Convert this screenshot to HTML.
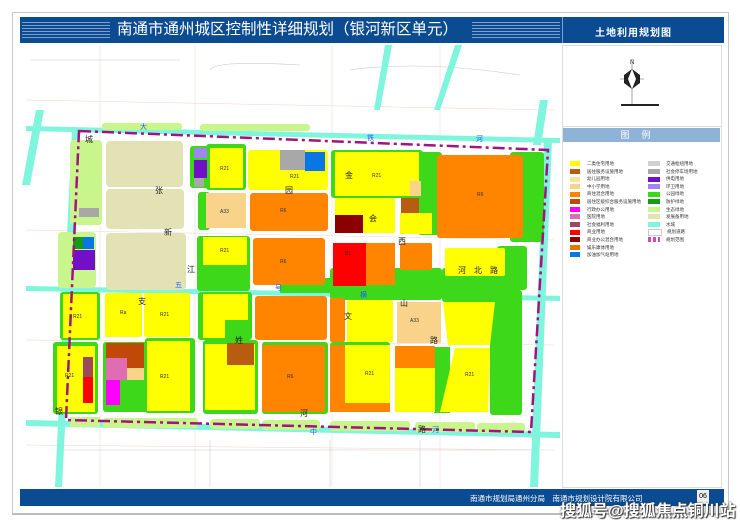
<!DOCTYPE html>
<html><head><meta charset="utf-8"><style>
body{margin:0;width:740px;height:523px;background:#fff;overflow:hidden;font-family:"Liberation Sans","Noto Sans CJK SC",sans-serif;position:relative}
.a{position:absolute}
</style></head><body>
<div class="a" style="left:12px;top:12px;width:715px;height:500px;border:1px solid #c8c8c8;border-bottom:2px solid #bbb"></div>
<div class="a" style="left:20px;top:17px;width:704px;height:26px;background:#0b4b92"></div>
<div class="a" style="left:22px;top:20px;width:88px;height:20px;background:repeating-linear-gradient(#0b4b92 0 2px,#7f9fc8 2px 3px)"></div>
<div class="a" style="left:472px;top:20px;width:88px;height:20px;background:repeating-linear-gradient(#0b4b92 0 2px,#7f9fc8 2px 3px)"></div>
<div class="a" style="left:562px;top:17px;width:1px;height:26px;background:#7f9fc8"></div>
<div class="a" style="left:117px;top:20px;color:#fff;font-size:15.5px;line-height:20px;white-space:nowrap">南通市通州城区控制性详细规划（银河新区单元）</div>
<div class="a" style="left:595px;top:24px;color:#fff;font-size:10px;font-weight:bold;letter-spacing:1px">土地利用规划图</div>
<div class="a" style="left:562px;top:45px;width:158px;height:80px;border:1px solid #ddd"></div>
<svg class="a" style="left:620px;top:55px" width="40" height="55"><line x1="12" y1="4" x2="12" y2="50" stroke="#666" stroke-width=".6"/><line x1="0" y1="24" x2="24" y2="24" stroke="#666" stroke-width=".6"/><polygon points="12,14 20,20 20,28 12,34 4,28 4,20" fill="#222"/><polygon points="12,14 16,24 12,34 8,24" fill="#fff"/><text x="10" y="9" font-size="6" fill="#333">N</text></svg>
<div class="a" style="left:621px;top:104px;width:38px;height:2px;background:#222"></div>
<div class="a" style="left:562px;top:126px;width:158px;height:360px;border:1px solid #ddd"></div>
<div class="a" style="left:563px;top:128px;width:157px;height:14px;background:#8fb3d6;color:#fff;font-size:9px;text-align:center;line-height:14px;letter-spacing:12px">图例</div>
<div class="a" style="left:20px;top:489px;width:704px;height:17px;background:#0b4b92"></div>
<div class="a" style="left:470px;top:493px;color:#fff;font-size:7.5px;white-space:nowrap">南通市规划局通州分局　南通市规划设计院有限公司</div>
<div class="a" style="left:697px;top:490px;width:12px;height:14px;background:#eee;color:#000;font-size:7px;text-align:center;line-height:14px">06</div>
<svg class="a" style="left:0;top:0" width="740" height="523" font-family="Liberation Sans,Noto Sans CJK SC,sans-serif">
<rect x="26" y="45" width="528" height="442" fill="#fff"/>
<g stroke="#f6d0d0" stroke-width=".5" fill="none">
<path d="M26 100 L554 110 M26 230 L554 240 M26 340 L554 345 M26 445 L554 450 M100 45 V487 M195 45 V487 M332 45 V487 M440 45 V487"/></g>
<g stroke="#ccc" stroke-width=".6" fill="none">
<path d="M30 60 H180 M210 70 Q215 60 300 65 M350 70 Q420 60 520 75 M60 450 H540 M210 440 V487 M330 440 V487 M420 440 V487"/></g>
<g fill="#7ff5dd">
<polygon points="36,110 44,110 30,185 22,185"/><polygon points="72,130 80,130 62,487 55,487"/>
<polygon points="26,126 560,138 560,143 26,131"/><polygon points="26,286 560,296 560,301 26,291"/>
<polygon points="26,420 560,432 560,438 26,426"/><polygon points="544,140 552,140 538,487 530,487"/>
<polygon points="540,100 548,100 541,145 533,145"/>
<polygon points="385,45 392,45 380,110 374,110"/><polygon points="455,45 462,45 440,110 434,110"/>
</g>
<g fill="#c8f58c">
<rect x="70" y="140" width="32" height="85" rx="4"/><rect x="58" y="232" width="38" height="56" rx="4"/>
<rect x="102" y="123" width="80" height="7" rx="3"/><rect x="200" y="124" width="110" height="7" rx="3"/>
<rect x="70" y="417" width="30" height="10"/><rect x="103" y="418" width="95" height="10" rx="3"/><rect x="210" y="419" width="50" height="10" rx="3"/><rect x="262" y="420" width="58" height="10" rx="3"/><rect x="330" y="421" width="80" height="10" rx="3"/><rect x="415" y="422" width="60" height="10" rx="3"/><rect x="477" y="423" width="48" height="10" rx="3"/>
</g>
<g fill="#e3e2b4"><rect x="106" y="141" width="77" height="46" rx="4"/><rect x="106" y="189" width="78" height="40" rx="4"/><rect x="106" y="233" width="80" height="57" rx="4"/></g>
<g fill="#3dd81a">
<rect x="190" y="146" width="20" height="42" rx="3"/><rect x="206" y="144" width="40" height="46" rx="3"/><rect x="198" y="192" width="12" height="38" rx="3"/>
<rect x="197" y="236" width="53" height="55" rx="3"/><rect x="331" y="150" width="92" height="48" rx="3"/><rect x="418" y="152" width="24" height="46" rx="3"/>
<rect x="418" y="197" width="22" height="38" rx="3"/><rect x="510" y="152" width="34" height="90" rx="3"/><rect x="497" y="246" width="30" height="44" rx="3"/>
<rect x="330" y="268" width="112" height="32" rx="3"/><rect x="442" y="268" width="60" height="34" rx="3"/><rect x="280" y="278" width="50" height="15"/>
<rect x="60" y="292" width="40" height="48" rx="3"/><rect x="198" y="292" width="54" height="48" rx="3"/><rect x="53" y="342" width="45" height="72" rx="3"/>
<rect x="103" y="342" width="45" height="70" rx="3"/><rect x="145" y="338" width="50" height="75" rx="3"/><rect x="203" y="340" width="55" height="74" rx="3"/>
<rect x="490" y="290" width="32" height="125" rx="3"/><rect x="434" y="347" width="16" height="66"/>
<rect x="262" y="342" width="66" height="72" rx="3"/><rect x="330" y="342" width="60" height="70" rx="3"/>
</g>
<g fill="#ffff00">
<rect x="210" y="148" width="33" height="40"/><rect x="248" y="150" width="80" height="40" rx="3"/><rect x="335" y="152" width="84" height="44"/>
<rect x="335" y="198" width="60" height="35" rx="2"/><rect x="400" y="213" width="32" height="21"/><rect x="203" y="237" width="44" height="28"/>
<rect x="445" y="248" width="60" height="28" rx="2"/><rect x="63" y="294" width="34" height="44"/><rect x="105" y="293" width="37" height="44" rx="2"/>
<rect x="144" y="293" width="46" height="44" rx="2"/><rect x="203" y="294" width="45" height="26"/><rect x="203" y="318" width="22" height="20"/>
<rect x="347" y="300" width="46" height="42" rx="2"/><polygon points="443,302 495,302 490,345 448,345"/><rect x="57" y="346" width="38" height="66"/>
<rect x="147" y="341" width="43" height="70"/><rect x="205" y="344" width="50" height="66"/><rect x="345" y="345" width="45" height="58"/>
<rect x="395" y="368" width="40" height="44"/><polygon points="455,348 490,348 488,412 440,412"/>
</g>
<g fill="#ff8400">
<rect x="250" y="193" width="78" height="38" rx="3"/><rect x="437" y="155" width="86" height="83" rx="3"/><rect x="253" y="238" width="72" height="47" rx="3"/>
<rect x="365" y="243" width="30" height="42"/><rect x="400" y="243" width="32" height="27" rx="2"/>
<rect x="262" y="345" width="63" height="67" rx="3"/><rect x="330" y="298" width="15" height="44" rx="2"/><polygon points="330,345 345,345 345,403 390,403 390,412 330,412"/>
<rect x="395" y="346" width="40" height="22"/><rect x="255" y="296" width="72" height="44" rx="3"/>
</g>
<g>
<rect x="333" y="243" width="33" height="43" fill="#ff0000"/><rect x="335" y="215" width="28" height="18" fill="#8b0000"/>
<rect x="401" y="198" width="18" height="15" fill="#b85c12"/><rect x="410" y="181" width="11" height="15" fill="#fad38a"/>
<rect x="280" y="150" width="25" height="20" fill="#a8a8a8"/><rect x="305" y="152" width="20" height="19" fill="#0a75e5"/>
<rect x="194" y="160" width="13" height="18" fill="#7210c8"/><rect x="194" y="148" width="13" height="10" fill="#9f86f2"/><rect x="194" y="178" width="10" height="9" fill="#a8a8a8"/>
<rect x="206" y="193" width="40" height="35" fill="#fad38a"/><rect x="397" y="302" width="44" height="41" fill="#fad38a"/>
<rect x="73" y="250" width="22" height="20" fill="#7210c8"/><rect x="73" y="237" width="10" height="12" fill="#169b17"/><rect x="83" y="237" width="11" height="12" fill="#0a75e5"/>
<rect x="79" y="208" width="20" height="9" fill="#a8a8a8"/>
<rect x="106" y="343" width="38" height="25" fill="#c0490a"/><rect x="106" y="358" width="21" height="22" fill="#e06db4"/><rect x="127" y="368" width="17" height="12" fill="#fad38a"/>
<rect x="106" y="380" width="14" height="25" fill="#ff00ff"/><rect x="83" y="357" width="10" height="20" fill="#9b4a5e"/><rect x="83" y="377" width="10" height="26" fill="#ff0000"/>
<rect x="227" y="343" width="27" height="22" fill="#b85c12"/>
</g>
<path d="M79 131 L548 150 L531 432 L66 420 Z" fill="none" stroke="#a3137f" stroke-width="2.5" stroke-dasharray="12,4,3,4"/>
<g font-size="5" fill="#333">
<text x="220" y="170">R21</text><text x="290" y="178">R21</text><text x="372" y="177">R21</text><text x="477" y="196">R6</text><text x="280" y="212">R6</text><text x="220" y="213">A33</text><text x="220" y="252">R21</text><text x="280" y="263">R6</text><text x="345" y="255">B1</text><text x="73" y="318">R21</text><text x="160" y="316">R21</text><text x="120" y="314">Ra</text><text x="65" y="377">R21</text><text x="160" y="378">R21</text><text x="287" y="378">R6</text><text x="410" y="322">A33</text><text x="465" y="376">R21</text><text x="365" y="375">R21</text>
</g>
<g font-size="8" fill="#222">
<text x="85" y="142">城</text><text x="155" y="193">张</text><text x="164" y="235">新</text><text x="187" y="272">江</text><text x="138" y="304">支</text><text x="285" y="193">园</text><text x="345" y="178">金</text><text x="369" y="221">会</text><text x="398" y="244">西</text><text x="458" y="273">河　北　路</text><text x="400" y="306">山</text><text x="344" y="319">文</text><text x="430" y="343">路</text><text x="235" y="343">姓</text><text x="300" y="416">河</text><text x="418" y="432">路</text><text x="55" y="414">银</text>
</g>
<g font-size="7" fill="#1e5cff"><text x="140" y="129">大</text><text x="367" y="140">铁</text><text x="476" y="141">河</text><text x="175" y="287">五</text><text x="275" y="290">号</text><text x="360" y="297">横</text><text x="310" y="434">中</text><text x="432" y="432">河</text></g>
</svg>
<div class="a" style="left:570px;top:160px;font-size:4.5px;line-height:7.6px;color:#333">
<div><span style="display:inline-block;width:10px;height:5px;background:#ff0;margin-right:7px;vertical-align:middle"></span>二类住宅用地</div>
<div><span style="display:inline-block;width:10px;height:5px;background:#b85c12;margin-right:7px;vertical-align:middle"></span>居住服务设施用地</div>
<div><span style="display:inline-block;width:10px;height:5px;background:#fae29a;margin-right:7px;vertical-align:middle"></span>幼儿园用地</div>
<div><span style="display:inline-block;width:10px;height:5px;background:#fad38a;margin-right:7px;vertical-align:middle"></span>中小学用地</div>
<div><span style="display:inline-block;width:10px;height:5px;background:#ff8400;margin-right:7px;vertical-align:middle"></span>商住混合用地</div>
<div><span style="display:inline-block;width:10px;height:5px;background:#c0490a;margin-right:7px;vertical-align:middle"></span>居住区级综合服务设施用地</div>
<div><span style="display:inline-block;width:10px;height:5px;background:#f0f;margin-right:7px;vertical-align:middle"></span>行政办公用地</div>
<div><span style="display:inline-block;width:10px;height:5px;background:#e06db4;margin-right:7px;vertical-align:middle"></span>医院用地</div>
<div><span style="display:inline-block;width:10px;height:5px;background:#9b4a5e;margin-right:7px;vertical-align:middle"></span>社会福利用地</div>
<div><span style="display:inline-block;width:10px;height:5px;background:#f00;margin-right:7px;vertical-align:middle"></span>商业用地</div>
<div><span style="display:inline-block;width:10px;height:5px;background:#8b0000;margin-right:7px;vertical-align:middle"></span>商业办公混合用地</div>
<div><span style="display:inline-block;width:10px;height:5px;background:#e07800;margin-right:7px;vertical-align:middle"></span>娱乐康体用地</div>
<div><span style="display:inline-block;width:10px;height:5px;background:#0a75e5;margin-right:7px;vertical-align:middle"></span>加油加气站用地</div>
</div>
<div class="a" style="left:648px;top:160px;font-size:4.5px;line-height:7.6px;color:#333">
<div><span style="display:inline-block;width:12px;height:5px;background:#d0d0d0;margin-right:6px;vertical-align:middle"></span>交通枢纽用地</div>
<div><span style="display:inline-block;width:12px;height:5px;background:#a8a8a8;margin-right:6px;vertical-align:middle"></span>社会停车场用地</div>
<div><span style="display:inline-block;width:12px;height:5px;background:#7210c8;margin-right:6px;vertical-align:middle"></span>供电用地</div>
<div><span style="display:inline-block;width:12px;height:5px;background:#9f86f2;margin-right:6px;vertical-align:middle"></span>环卫用地</div>
<div><span style="display:inline-block;width:12px;height:5px;background:#3dd81a;margin-right:6px;vertical-align:middle"></span>公园绿地</div>
<div><span style="display:inline-block;width:12px;height:5px;background:#169b17;margin-right:6px;vertical-align:middle"></span>防护绿地</div>
<div><span style="display:inline-block;width:12px;height:5px;background:#c8f58c;margin-right:6px;vertical-align:middle"></span>生态绿地</div>
<div><span style="display:inline-block;width:12px;height:5px;background:#e3e2b4;margin-right:6px;vertical-align:middle"></span>发展备用地</div>
<div><span style="display:inline-block;width:12px;height:5px;background:#7ff5dd;margin-right:6px;vertical-align:middle"></span>水域</div>
<div><span style="display:inline-block;width:12px;height:5px;background:#fff;border:1px solid #ccc;margin-right:5px;vertical-align:middle"></span>规划道路</div>
<div><span style="display:inline-block;width:12px;height:5px;background:repeating-linear-gradient(90deg,#d04ab8 0 3px,#fff 3px 5px);margin-right:6px;vertical-align:middle"></span>规划范围</div>
</div>
<div class="a" style="left:560px;top:497px;color:#fff;font-size:16px;font-weight:bold;white-space:nowrap;text-shadow:0 0 2px #333,1px 1px 1px #333">搜狐号@搜狐焦点铜川站</div>
</body></html>
